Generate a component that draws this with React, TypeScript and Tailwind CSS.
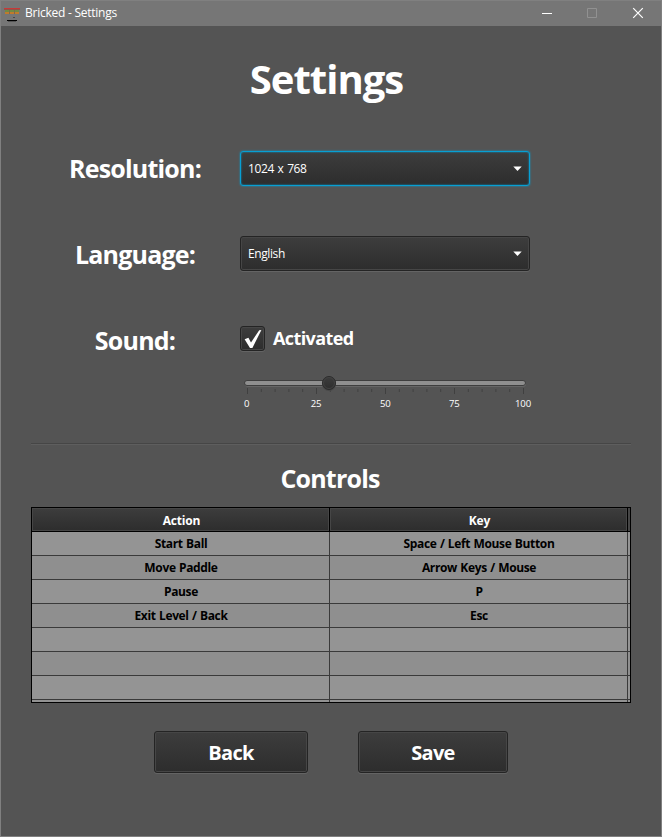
import React from "react";

const controls = [
  ["Start Ball", "Space / Left Mouse Button"],
  ["Move Paddle", "Arrow Keys / Mouse"],
  ["Pause", "P"],
  ["Exit Level / Back", "Esc"],
  ["", ""],
  ["", ""],
  ["", ""],
];

const raised =
  "rounded-[3px] border border-[#242424] bg-linear-to-b from-[#3d3d3d] to-[#2d2d2d] shadow-[0_1px_0_#646464,inset_0_0_0_1px_#464646]";

function AppIcon() {
  return (
    <svg width="16" height="16" viewBox="0 0 16 16" shapeRendering="crispEdges" className="mt-[2px]">
      <rect y="1" width="16" height="1" fill="#c83838" />
      <rect y="2" width="16" height="1" fill="#8f5449" />
      <rect x="1" y="3" width="14" height="2" fill="#6f8a45" />
      <rect x="1" y="5" width="14" height="2" fill="#c07a2c" />
      <path d="M5 3h1v4H5zM10 3h1v4h-1z" fill="#7a6a4c" />
      <rect x="9" y="10" width="2" height="1" fill="#484848" />
      <rect x="3" y="13" width="10" height="1" fill="#000" />
      <rect x="4" y="14" width="8" height="1" fill="#555" />
    </svg>
  );
}

function TitleBar() {
  return (
    <header className="flex h-[25px] items-center bg-[#767676] pl-[3px]">
      <AppIcon />
      <span className="-mt-px ml-[5px] flex-1 text-[12px] leading-4 tracking-[-0.25px]">Bricked - Settings</span>
      <svg width="104" height="12" viewBox="0 0 104 12" className="mt-[-1px] mr-[16px]" fill="none">
        <path d="M1 6.5h10" stroke="#fff" />
        <path d="M46.5 1.5h9v9h-9z" stroke="#919191" />
        <path d="M92.2 1.2l9.6 9.6M101.8 1.2l-9.6 9.6" stroke="#fff" strokeWidth="1.2" />
      </svg>
    </header>
  );
}

function Select({ value, focused = false }: { value: string; focused?: boolean }) {
  const frame = focused
    ? "rounded-[3px] border border-[#079fd3] bg-linear-to-b from-[#3d3d3d] to-[#2d2d2d] shadow-[0_0_2px_#079fd3,inset_0_0_2px_#079fd3]"
    : raised;
  return (
    <button className={`flex h-[35px] w-[290px] items-center justify-between pr-[7px] pl-[7px] text-[12px] ${frame}`}>
      <span className="tracking-[-0.4px] [word-spacing:1px]">{value}</span>
      <svg width="9" height="6" viewBox="0 0 9 6" className="mt-px">
        <path d="M.3 .5h8.4L4.5 5z" fill="#fff" />
      </svg>
    </button>
  );
}

function VolumeSlider() {
  const ticks = Array.from({ length: 21 }, (_, i) => i);
  return (
    <svg width="292" height="40" viewBox="240 372 292 40" className="block">
      <defs>
        <linearGradient id="thumb" x1="0" y1="0" x2="0" y2="1">
          <stop offset="0" stopColor="#3d3d3d" />
          <stop offset="1" stopColor="#2d2d2d" />
        </linearGradient>
      </defs>
      <rect x="245" y="381" width="281" height="6" rx="3" fill="#666" />
      <rect x="244.5" y="380.5" width="281" height="5" rx="2.5" fill="#8f8f8f" stroke="#3e3e3e" />
      {ticks.map((i) => (
        <path
          key={i}
          d={i % 5 === 0 ? `M${247.5 + i * 13.8} 388v6` : `M${247.5 + i * 13.8} 389v3`}
          stroke="#404040"
        />
      ))}
      <circle cx="329" cy="384" r="7" fill="#484848" />
      <circle cx="329" cy="383" r="6.5" fill="url(#thumb)" stroke="#2c2c2c" />
      <circle cx="329" cy="383" r="5.5" fill="none" stroke="#424242" />
      <g fill="#fff" fontSize="9.6" textAnchor="middle">
        <text x="246.7" y="407">0</text>
        <text x="316" y="407" letterSpacing="-.2">25</text>
        <text x="385.3" y="407" letterSpacing="-.2">50</text>
        <text x="454.3" y="407" letterSpacing="-.2">75</text>
        <text x="523" y="407" letterSpacing="-.2">100</text>
      </g>
    </svg>
  );
}

function ControlsTable() {
  const cols = "grid grid-cols-[298px_298px_1fr]";
  const head =
    "border-r border-black shadow-[inset_0_0_0_1px_#464646] flex items-center justify-center pt-[2px] pl-[2px] tracking-[-0.2px]";
  const cell =
    "flex items-center justify-center border-r border-[#3a3a3a] pl-px pt-px tracking-[-0.35px] [word-spacing:0.6px]";
  return (
    <div className="mx-auto h-[196px] w-[600px] overflow-hidden border border-black bg-[#929292] text-[12px] font-bold">
      <div className={`${cols} h-[24px] border-b border-black bg-linear-to-b from-[#3d3d3d] to-[#2d2d2d]`}>
        <div className={head}>Action</div>
        <div className={head}>Key</div>
        <div className="shadow-[inset_0_0_0_1px_#464646]" />
      </div>
      {controls.map(([action, key], i) => (
        <div key={i} className={`${cols} h-[24px] border-b border-[#3a3a3a] text-black odd:bg-[#8f8f8f] even:bg-[#949494]`}>
          <div className={cell}>{action}</div>
          <div className={cell}>{key}</div>
        </div>
      ))}
      <div className={`${cols} h-[2px]`}>
        <div className="border-r border-[#3a3a3a]" />
        <div className="border-r border-[#3a3a3a]" />
      </div>
    </div>
  );
}

export default function App() {
  const label = "w-[208px] pr-[2px] text-center text-[25px] leading-[35px] font-bold tracking-[-0.8px]";
  return (
    <div className="flex h-[837px] w-[662px] flex-col border border-[#808080] bg-[#545454] font-['Open_Sans','Noto_Sans',sans-serif] text-white">
      <TitleBar />
      <main className="flex flex-1 flex-col">
        <h1 className="mt-[26px] h-[54px] pr-[9px] text-center text-[40px] leading-[54px] font-bold tracking-[-1px]">
          Settings
        </h1>
        <section className="mt-[45px] flex flex-col pl-[31px]">
          <div className="flex h-[35px]">
            <span className={label}>Resolution:</span>
            <Select value="1024 x 768" focused />
          </div>
          <div className="mt-[50px] flex h-[35px]">
            <span className={`${label} pt-px`}>Language:</span>
            <Select value="English" />
          </div>
          <div className="mt-[55px] flex">
            <span className={`${label} -mt-[3px]`}>Sound:</span>
            <div>
              <div className="flex h-[25px] items-center">
                <span className={`flex h-[25px] w-[25px] items-center justify-center ${raised}`}>
                  <svg width="18" height="20" viewBox="0 0 18 20">
                    <path d="M.6 10.2L4.4 8.8l2.6 4.8L15.2 1.2l2.2-.2L8.4 19H6z" fill="#fff" />
                  </svg>
                </span>
                <span className="ml-[8px] text-[18px] font-bold tracking-[-0.6px]">Activated</span>
              </div>
              <div className="mt-[21px]">
                <VolumeSlider />
              </div>
            </div>
          </div>
        </section>
        <div className="mx-[30px] mt-[31px] h-[2px] border-t border-b border-t-[#464646] border-b-[#5e5e5e]" />
        <h2 className="mt-[15px] h-[37px] pr-[2px] text-center text-[25px] leading-[36px] font-bold tracking-[-0.8px]">
          Controls
        </h2>
        <div className="mt-[10px]">
          <ControlsTable />
        </div>
        <div className="mt-[28px] flex gap-[50px] pl-[153px] text-[20px] font-bold tracking-[-0.7px]">
          <button className={`h-[42px] w-[154px] pt-[2px] ${raised}`}>Back</button>
          <button className={`h-[42px] w-[150px] pt-[2px] ${raised}`}>Save</button>
        </div>
      </main>
    </div>
  );
}
